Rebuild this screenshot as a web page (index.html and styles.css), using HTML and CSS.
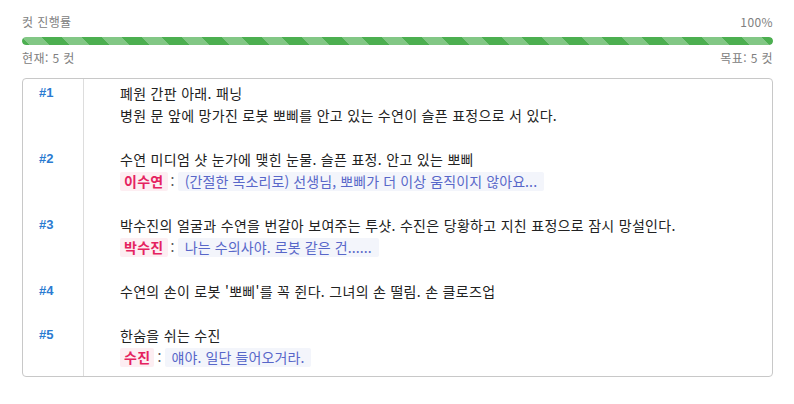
FILE: index.html
```html
<!DOCTYPE html>
<html lang="ko">
<head>
<meta charset="utf-8">
<title>컷 진행률</title>
<link rel="stylesheet" href="styles.css">
</head>
<body>
<div class="page">
  <div class="meta-row">
    <span>컷 진행률</span>
    <span>100%</span>
  </div>
  <div class="bar"><div class="bar-fill" style="width:100%"></div></div>
  <div class="meta-row meta-row--below">
    <span>현재: 5 컷</span>
    <span>목표: 5 컷</span>
  </div>

  <div class="cuts">
    <div class="cut">
      <div class="cut-no">#1</div>
      <div class="cut-body">
        <div class="line">폐원 간판 아래. 패닝</div>
        <div class="line">병원 문 앞에 망가진 로봇 뽀삐를 안고 있는 수연이 슬픈 표정으로 서 있다.</div>
      </div>
    </div>
    <div class="cut">
      <div class="cut-no">#2</div>
      <div class="cut-body">
        <div class="line">수연 미디엄 샷 눈가에 맺힌 눈물. 슬픈 표정. 안고 있는 뽀삐</div>
        <div class="line dialog"><span class="speaker">이수연</span><span class="colon">:</span><span class="speech">(간절한 목소리로) 선생님, 뽀삐가 더 이상 움직이지 않아요...</span></div>
      </div>
    </div>
    <div class="cut">
      <div class="cut-no">#3</div>
      <div class="cut-body">
        <div class="line">박수진의 얼굴과 수연을 번갈아 보여주는 투샷. 수진은 당황하고 지친 표정으로 잠시 망설인다.</div>
        <div class="line dialog"><span class="speaker">박수진</span><span class="colon">:</span><span class="speech">나는 수의사야. 로봇 같은 건......</span></div>
      </div>
    </div>
    <div class="cut">
      <div class="cut-no">#4</div>
      <div class="cut-body">
        <div class="line">수연의 손이 로봇 '뽀삐'를 꼭 쥔다. 그녀의 손 떨림. 손 클로즈업</div>
      </div>
    </div>
    <div class="cut">
      <div class="cut-no">#5</div>
      <div class="cut-body">
        <div class="line">한숨을 쉬는 수진</div>
        <div class="line dialog"><span class="speaker">수진</span><span class="colon">:</span><span class="speech">얘야. 일단 들어오거라.</span></div>
      </div>
    </div>
  </div>
</div>
</body>
</html>
```

FILE: styles.css
```css
* { box-sizing: border-box; }

html, body {
  margin: 0;
  padding: 0;
  background: #ffffff;
}

body {
  font-family: "Noto Sans CJK KR", "Noto Sans", sans-serif;
  color: #222222;
}

.page {
  padding: 13px 21px 0 22px;
}

.meta-row {
  display: flex;
  justify-content: space-between;
  font-size: 12px;
  letter-spacing: 0.4px;
  line-height: 18px;
  color: #808080;
}

.meta-row--below {
  margin-top: 4px;
}

.bar {
  margin-top: 6px;
  height: 8px;
  border-radius: 4px;
  background: #e9ecef;
  overflow: hidden;
}

.bar-fill {
  height: 100%;
  border-radius: 4px;
  background-color: #4caf50;
  background-image: linear-gradient(45deg,
    rgba(255,255,255,.3) 25%, transparent 25%,
    transparent 50%, rgba(255,255,255,.3) 50%,
    rgba(255,255,255,.3) 75%, transparent 75%, transparent);
  background-size: 40px 40px;
}

.cuts {
  margin-top: 11px;
  border: 1px solid #c8c8c8;
  border-radius: 4px;
}

.cut {
  display: grid;
  grid-template-columns: 61px 1fr;
}

.cut-no {
  border-right: 1px solid #dddddd;
  padding: 3px 0 19px 16px;
  font-size: 13px;
  font-weight: 700;
  line-height: 22px;
  color: #2b7bd1;
  font-family: "Liberation Sans", "Noto Sans", sans-serif;
}

.cut-body {
  padding: 3px 0 19px 36px;
  font-size: 14px;
  letter-spacing: 0.3px;
  line-height: 22px;
}

.cut:last-child .cut-no,
.cut:last-child .cut-body {
  padding-bottom: 8px;
}

.line {
  height: 22px;
}

.dialog {
  display: flex;
  align-items: center;
  padding-top: 1px;
}

.speaker {
  background: #fdeef2;
  color: #e5225f;
  font-weight: 700;
  padding: 0 4px;
  line-height: 19px;
  border-radius: 2px;
}

.colon {
  color: #555555;
  line-height: 19px;
  padding: 0 3px 0 3px;
}

.speech {
  background: #f3f5fb;
  color: #5867c9;
  padding: 0 7px;
  letter-spacing: 0.1px;
  line-height: 19px;
  border-radius: 2px;
}
```
